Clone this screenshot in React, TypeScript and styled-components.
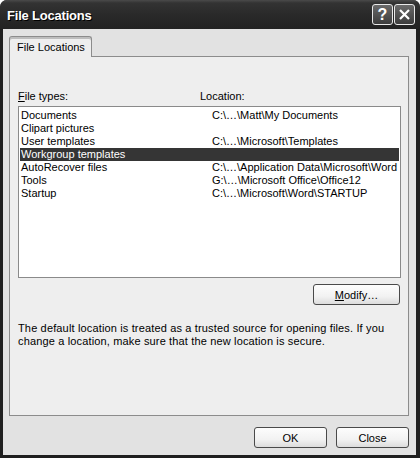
import { createGlobalStyle } from 'styled-components';
import styled from 'styled-components';

const GlobalStyle = createGlobalStyle`
  html, body {
    margin: 0;
    padding: 0;
    background: #ffffff;
  }
  body {
    font-family: "Liberation Sans", Arial, sans-serif;
    font-size: 11px;
    color: #000;
  }
`;

const Window = styled.div`
  width: 420px;
  height: 458px;
  box-sizing: border-box;
  background: #1f1f1f;
  border-radius: 7px 7px 0 0;
  display: flex;
  flex-direction: column;
  overflow: hidden;
`;

const TitleBar = styled.div`
  height: 29px;
  flex: none;
  display: flex;
  align-items: center;
  padding: 0 5px 0 7px;
  background: linear-gradient(#4a4a4a 0px, #333 3px, #2a2a2a 14px, #222 29px);
`;

const Title = styled.div`
  flex: 1;
  color: #fff;
  font-weight: bold;
  font-size: 13px;
  letter-spacing: -0.2px;
  text-shadow: 1px 1px 0 #000;
  padding-top: 1px;
`;

const CaptionButton = styled.div`
  width: 21px;
  height: 21px;
  box-sizing: border-box;
  margin-left: 1px;
  border: 1px solid #e8e8e8;
  border-radius: 3px;
  background: linear-gradient(#6a6a6a, #3c3c3c);
  display: flex;
  align-items: center;
  justify-content: center;
  color: #fff;
  font-weight: bold;
  font-size: 16px;
`;

const Body = styled.div`
  flex: 1;
  margin: 0 4px 3px 3px;
  background: #e2e2e2;
  padding: 7px 7px 0 6px;
  display: flex;
  flex-direction: column;
`;

const TabStrip = styled.div`
  display: flex;
  height: 21px;
  margin-bottom: -1px;
  position: relative;
  z-index: 1;
`;

const Tab = styled.div`
  width: 83px;
  height: 21px;
  box-sizing: border-box;
  border: 1px solid #8c8c8c;
  border-bottom: none;
  border-radius: 3px 3px 0 0;
  background: #eeeeee;
  padding: 4px 0 0 7px;
  box-shadow: inset 0 2px 0 #bdbdbd;
`;

const TabPanel = styled.div`
  height: 360px;
  box-sizing: border-box;
  border: 1px solid #8c8c8c;
  background: #eeeeee;
  padding: 33px 7px 0 8px;
  display: flex;
  flex-direction: column;
`;

const HeaderRow = styled.div`
  display: grid;
  grid-template-columns: 182px 1fr;
  height: 13px;
  line-height: 13px;
  margin-bottom: 3px;
`;

const Key = styled.span`
  text-decoration: underline;
`;

const List = styled.div`
  height: 172px;
  box-sizing: border-box;
  border: 1px solid #8a8a8a;
  background: #fff;
  padding: 2px 1px 0 1px;
`;

const Row = styled.div<{ $selected?: boolean }>`
  display: grid;
  grid-template-columns: 191px 1fr;
  height: 13px;
  line-height: 13px;
  padding-left: 1px;
  white-space: nowrap;
  background: ${(p) => (p.$selected ? '#353535' : 'transparent')};
  color: ${(p) => (p.$selected ? '#fff' : '#000')};
`;

const ModifyRow = styled.div`
  display: flex;
  justify-content: flex-end;
  margin-top: 6px;
  padding-right: 1px;
`;

const Button = styled.div<{ $width: number }>`
  width: ${(p) => p.$width}px;
  height: 21px;
  box-sizing: border-box;
  border: 1px solid #4a4a4a;
  border-radius: 3px;
  background: linear-gradient(#fdfdfd, #f2f2f2 60%, #dcdcdc);
  display: flex;
  align-items: center;
  justify-content: center;
`;

const Note = styled.p`
  margin: 17px 0 0 0;
  line-height: 13px;
  letter-spacing: 0.15px;
`;

const Footer = styled.div`
  display: flex;
  justify-content: flex-end;
  gap: 9px;
  margin-top: 11px;
`;

const files = [
  { name: 'Documents', path: 'C:\\...\\Matt\\My Documents' },
  { name: 'Clipart pictures', path: '' },
  { name: 'User templates', path: 'C:\\...\\Microsoft\\Templates' },
  { name: 'Workgroup templates', path: '', selected: true },
  { name: 'AutoRecover files', path: 'C:\\...\\Application Data\\Microsoft\\Word' },
  { name: 'Tools', path: 'G:\\...\\Microsoft Office\\Office12' },
  { name: 'Startup', path: 'C:\\...\\Microsoft\\Word\\STARTUP' },
];

export default function App() {
  return (
    <>
      <GlobalStyle />
      <Window>
        <TitleBar>
          <Title>File Locations</Title>
          <CaptionButton>?</CaptionButton>
          <CaptionButton>
            <svg width="13" height="13" viewBox="0 0 13 13">
              <path d="M2 2 L11 11 M11 2 L2 11" stroke="#fff" strokeWidth="2.2" />
            </svg>
          </CaptionButton>
        </TitleBar>
        <Body>
          <TabStrip>
            <Tab>File Locations</Tab>
          </TabStrip>
          <TabPanel>
            <HeaderRow>
              <span>
                <Key>F</Key>ile types:
              </span>
              <span>Location:</span>
            </HeaderRow>
            <List>
              {files.map((f) => (
                <Row key={f.name} $selected={f.selected}>
                  <span>{f.name}</span>
                  <span>{f.path.replace(/\.\.\./g, '…')}</span>
                </Row>
              ))}
            </List>
            <ModifyRow>
              <Button $width={87}>
                <span>
                  <Key>M</Key>odify…
                </span>
              </Button>
            </ModifyRow>
            <Note>
              The default location is treated as a trusted source for opening files. If you
              <br />
              change a location, make sure that the new location is secure.
            </Note>
          </TabPanel>
          <Footer>
            <Button $width={73}>OK</Button>
            <Button $width={73}>Close</Button>
          </Footer>
        </Body>
      </Window>
    </>
  );
}
